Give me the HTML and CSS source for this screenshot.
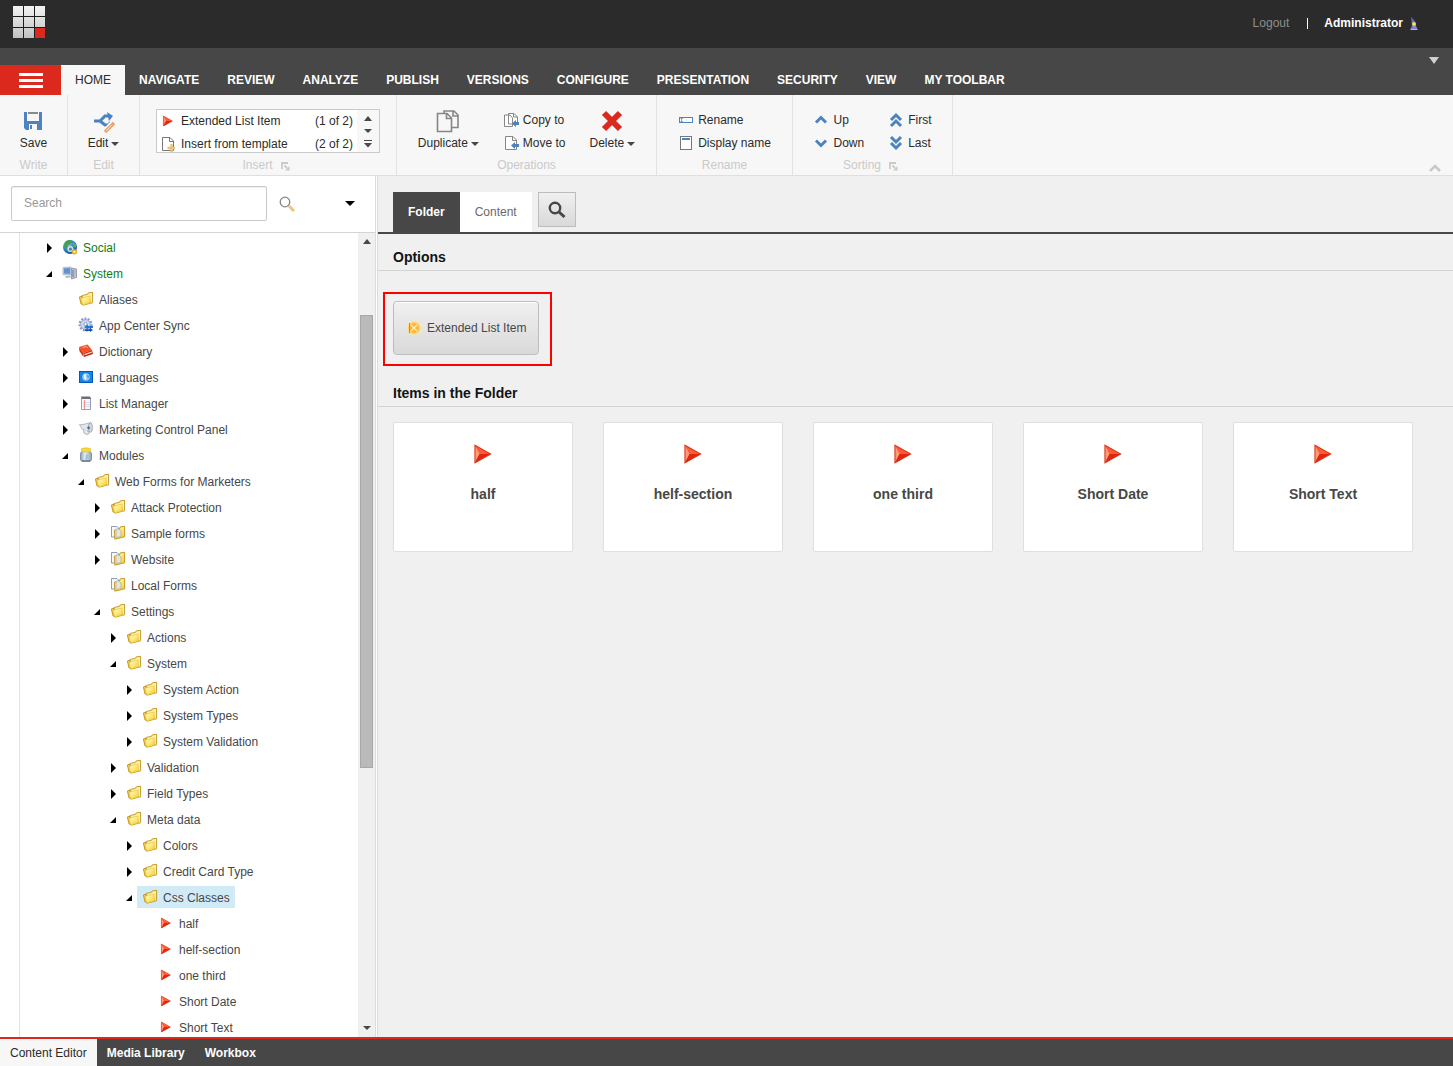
FILE: index.html
```html
<!DOCTYPE html>
<html lang="en">
<head>
    <meta charset="utf-8">
    <title>Content Editor</title>
    <link rel="stylesheet" href="styles.css">
</head>
<body>
    <!-- Icon sprite -->
    <svg class="sprite" width="0" height="0" aria-hidden="true">
        <defs>
            <linearGradient id="g-folder" x1="0" y1="0" x2="1" y2="1">
                <stop offset="0" stop-color="#fffbd8"/>
                <stop offset="0.5" stop-color="#fdea78"/>
                <stop offset="1" stop-color="#f3c62c"/>
            </linearGradient>
            <linearGradient id="g-logo" x1="0" y1="0" x2="0" y2="1">
                <stop offset="0" stop-color="#f4f4f4"/>
                <stop offset="1" stop-color="#c0c0c0"/>
            </linearGradient>
            <linearGradient id="g-jar" x1="0" y1="0" x2="1" y2="0">
                <stop offset="0" stop-color="#8b9fae"/>
                <stop offset="0.4" stop-color="#e4f1f8"/>
                <stop offset="1" stop-color="#8fa3b2"/>
            </linearGradient>
            <radialGradient id="g-globe" cx="0.35" cy="0.3" r="0.8">
                <stop offset="0" stop-color="#9ad4f6"/>
                <stop offset="0.5" stop-color="#2f83cf"/>
                <stop offset="1" stop-color="#124a8c"/>
            </radialGradient>
            <radialGradient id="g-glow">
                <stop offset="0" stop-color="#ffa62b"/>
                <stop offset="0.55" stop-color="#ffb93a"/>
                <stop offset="0.8" stop-color="#ffe07c" stop-opacity="0.7"/>
                <stop offset="1" stop-color="#ffe89a" stop-opacity="0"/>
            </radialGradient>
        </defs>
        <symbol id="folder" viewBox="0 0 16 16">
            <path d="M1.4 6 L4 5 L5 13.6 L3 13 Z" fill="#f3cf4c" stroke="#bf9118" stroke-width="0.9"/>
            <path d="M4.2 4.4 L9.4 3.4 L10.2 1.9 L14.6 1.3 V11.8 L4.8 14.2 Z" fill="#fdf0a0" stroke="#bf9118" stroke-width="0.9"/>
            <path d="M3.2 7.2 L12 5 L12.6 12 L4.6 13.9 Z" fill="url(#g-folder)" stroke="#e3bb3c" stroke-width="0.6"/>
        </symbol>
        <symbol id="forms" viewBox="0 0 16 16">
            <path d="M1.5 1.5 H7 L8.5 3 V12 H1.5 Z" fill="#f5f7fb" stroke="#8791a8" stroke-width="0.9"/>
            <path d="M4.4 5.2 L9.4 4.4 L10.2 1.9 L14.6 1.3 V11.8 L4.8 14.2 Z" fill="url(#g-folder)" stroke="#bf9118" stroke-width="0.9"/>
            <path d="M6 4 H9 L11 6 V11.5 L6 12.6 Z" fill="#e4e6da" stroke="#b5aa7c" stroke-width="0.7"/>
        </symbol>
        <symbol id="arrow-red" viewBox="0 0 16 16">
            <path d="M3.4 3 L12.4 8 L3.4 13 Z" fill="#ff5a36"/>
            <path d="M3.4 3 L6 8 L3.4 13 Z" fill="#ff9a78"/>
            <path d="M6 8 H12.4 L3.4 13 Z" fill="#e02410"/>
            <path d="M3.4 3 L12.4 8 L3.4 13 Z" fill="none" stroke="#d8381c" stroke-width="0.6"/>
        </symbol>
        <symbol id="globe" viewBox="0 0 16 16">
            <circle cx="8" cy="8" r="7" fill="url(#g-globe)"/>
            <path d="M3 3 Q6 0 10 1.5 L9 5 L6 6 L5 10 L2 8 Z" fill="#43a04b"/>
            <path d="M11 3 L14 5 V9 L11 7 Z" fill="#58b04e"/>
            <circle cx="8.4" cy="10" r="2.3" fill="none" stroke="#d8dbde" stroke-width="1.5"/>
            <circle cx="12.4" cy="12.8" r="1.9" fill="#fff4c4" stroke="#dca828" stroke-width="1.4"/>
        </symbol>
        <symbol id="computer" viewBox="0 0 16 16">
            <path d="M1 2.5 L9 2 V10 L1 9.5 Z" fill="#c3cbd8" stroke="#a9b1c0" stroke-width="0.8"/>
            <path d="M2 3.5 L8 3.1 V8.8 L2 8.5 Z" fill="#5e92d2"/>
            <path d="M3 11 L8 10.5 L9 12.5 L4 13 Z" fill="#b7bcc6"/>
            <path d="M9.5 3 L14.5 4 V12.5 L9.5 14 Z" fill="#b9bdc8" stroke="#8b909e" stroke-width="0.8"/>
            <path d="M11 5 V12" stroke="#5a82bc"/>
        </symbol>
        <symbol id="gear" viewBox="0 0 16 16">
            <circle cx="7.5" cy="7.5" r="5.8" fill="none" stroke="#8f9bc2" stroke-width="2.4" stroke-dasharray="2 1.2"/>
            <circle cx="7.5" cy="7.5" r="4.8" fill="#d3d9ec" stroke="#98a4ca"/>
            <circle cx="7.5" cy="7" r="1.6" fill="#fff" stroke="#8b98bf"/>
            <path d="M6 10 L10 7.5 V9 H15 V11 H10 V12.5 Z" fill="#1c78d8"/>
            <path d="M15 13 L12 15 V14 H7 V12.2 H12 V11 Z" fill="#0d55ae"/>
        </symbol>
        <symbol id="book" viewBox="0 0 16 16">
            <path d="M1 4 L9.5 1.5 L14 7 L5.5 10 Z" fill="#f4502c"/>
            <path d="M1 4 L5.5 10 V14 L1.4 8 Z" fill="#d5361a"/>
            <path d="M5.5 10 L14 7 L15 11 L6 14 Z" fill="#c92a12"/>
            <path d="M6.5 11.6 L14 9" stroke="#f4dcd4" stroke-width="1.2"/>
            <path d="M4.5 4.6 L8.6 3.4 L9.8 5" fill="none" stroke="#ffab8c"/>
        </symbol>
        <symbol id="language" viewBox="0 0 16 16">
            <rect x="1.5" y="2.5" width="13" height="11" fill="#1484ea" stroke="#0757b8"/>
            <circle cx="8" cy="8" r="3.8" fill="#8fcbfa"/>
            <path d="M6 5.5 L8 5 L7.4 7.5 L8.6 9 L7.4 11 L6 8.6 Z" fill="#fff"/>
            <path d="M9 6 L11 7 L10 9.6 Z" fill="#2d8fe8"/>
        </symbol>
        <symbol id="list" viewBox="0 0 16 16">
            <path d="M3.5 3 H12.5 V14.5 H3.5 Z" fill="#f4f6fd" stroke="#9094b0" stroke-width="0.9"/>
            <path d="M3 1.5 H12 L13 4 H4 Z" fill="#6c6e78"/>
            <path d="M5 7.5 H12 M5 9.5 H12 M5 11.5 H12" stroke="#d3daf1"/>
            <path d="M6.5 5 V14" stroke="#e88a78" stroke-width="0.9"/>
        </symbol>
        <symbol id="megaphone" viewBox="0 0 16 16">
            <path d="M1.5 3.5 H5 L13 1.5 V11 L8 9.5 L4 8 Z" fill="#e3e5e8" stroke="#aaaeb4" stroke-width="0.8"/>
            <ellipse cx="12.4" cy="6.5" rx="2" ry="4.8" fill="#d5d8dc" stroke="#989ca2" stroke-width="0.8"/>
            <circle cx="10.6" cy="6.8" r="1.4" fill="#2a6fc4"/>
            <path d="M5.5 8.5 L6 12 L9 13.5 L11.5 12 L9 9.6" fill="#e6e8ea" stroke="#9da1a6" stroke-width="0.8"/>
        </symbol>
        <symbol id="jar" viewBox="0 0 16 16">
            <rect x="2.5" y="4.5" width="11" height="10" rx="2.5" fill="url(#g-jar)" stroke="#8496a4"/>
            <path d="M3.5 1.5 Q8 0.2 12.5 1.5 V4.5 Q8 5.6 3.5 4.5 Z" fill="#f9d93a" stroke="#e0b820" stroke-width="0.6"/>
            <path d="M8 7 L10 8 V12 L7 13 Z" fill="#9fc4dc"/>
            <path d="M4 13.8 H12" stroke="#5d6a75"/>
        </symbol>
        <symbol id="collapsed" viewBox="0 0 16 16">
            <path d="M6 3 L11 8 L6 13 Z" fill="#000"/>
        </symbol>
        <symbol id="expanded" viewBox="0 0 16 16">
            <path d="M11 5 V11 H5 Z" fill="#000"/>
        </symbol>
        <symbol id="down" viewBox="0 0 8 8">
            <path d="M0 2 H8 L4 6 Z" fill="currentColor"/>
        </symbol>
        <symbol id="up" viewBox="0 0 8 8">
            <path d="M0 6 H8 L4 1 Z" fill="currentColor"/>
        </symbol>
        <symbol id="launch" viewBox="0 0 9 9">
            <path d="M1 7 V1 H7" fill="none" stroke="#c9c9c9" stroke-width="1.8"/>
            <path d="M3.5 3.5 L6 6" stroke="#c9c9c9" stroke-width="1.8"/>
            <path d="M8.5 4 V8.5 H4 Z" fill="#c9c9c9"/>
        </symbol>
        <symbol id="sort-up" viewBox="0 0 16 16">
            <path d="M3 10.5 L8 5.5 L13 10.5" fill="none" stroke="#4c82bd" stroke-width="3"/>
        </symbol>
        <symbol id="sort-down" viewBox="0 0 16 16">
            <path d="M3 5.5 L8 10.5 L13 5.5" fill="none" stroke="#4c82bd" stroke-width="3"/>
        </symbol>
        <symbol id="sort-first" viewBox="0 0 16 16">
            <path d="M3 8 L8 3 L13 8 M3 14 L8 9 L13 14" fill="none" stroke="#4c82bd" stroke-width="3"/>
        </symbol>
        <symbol id="sort-last" viewBox="0 0 16 16">
            <path d="M3 2 L8 7 L13 2 M3 8 L8 13 L13 8" fill="none" stroke="#4c82bd" stroke-width="3"/>
        </symbol>
    </svg>

    <header class="top-bar">
        <a href="#" class="logo" aria-label="Start">
            <svg width="33" height="33" viewBox="0 0 33 33">
                <rect x="0" y="0" width="32" height="32" fill="url(#g-logo)"/>
                <rect x="22" y="22" width="10" height="10" fill="#dc291e"/>
                <path d="M10.5 0 V32 M21.5 0 V32 M0 10.5 H32 M0 21.5 H32" stroke="#1c1c1c"/>
            </svg>
        </a>
        <div class="account">
            <a href="#" class="logout">Logout</a>
            <span class="divider"></span>
            <span class="user">Administrator</span>
            <svg class="user-icon" width="8" height="14" viewBox="0 0 8 14">
                <path d="M1 0 L5 4 L6 9 H2 Z" fill="#6464bc"/>
                <path d="M2 9 H6 L8 13 H0 Z" fill="#8080d0"/>
                <circle cx="4" cy="7" r="2" fill="#f3e04a"/>
                <path d="M1 12.5 H7" stroke="#b4b4e6"/>
            </svg>
        </div>
    </header>

    <nav class="ribbon-tabs">
        <button class="menu-btn" aria-label="Menu"><span></span><span></span><span></span></button>
        <a href="#" class="active">HOME</a>
        <a href="#">NAVIGATE</a>
        <a href="#">REVIEW</a>
        <a href="#">ANALYZE</a>
        <a href="#">PUBLISH</a>
        <a href="#">VERSIONS</a>
        <a href="#">CONFIGURE</a>
        <a href="#">PRESENTATION</a>
        <a href="#">SECURITY</a>
        <a href="#">VIEW</a>
        <a href="#">MY TOOLBAR</a>
        <button class="tabs-more" aria-label="More">
            <svg width="10" height="8" viewBox="0 0 10 8"><path d="M0 1 H10 L5 8 Z" fill="#d0d0d0"/></svg>
        </button>
    </nav>

    <section class="ribbon">
        <div class="chunk chunk-write">
            <div class="chunk-body">
                <button class="big-btn">
                    <svg width="24" height="24" viewBox="0 0 24 24">
                        <path d="M3 3 H21 V21 H5 L3 19 Z" fill="#4f82be"/>
                        <rect x="6" y="3" width="12" height="9" fill="#f7f7f7"/>
                        <path d="M7 4 H17" stroke="#8a8a8a" stroke-width="2"/>
                        <rect x="8" y="15" width="8" height="6" fill="#f7f7f7"/>
                        <rect x="9" y="16" width="2" height="4" fill="#4f82be"/>
                    </svg>
                    <span>Save</span>
                </button>
            </div>
            <div class="chunk-title">Write</div>
        </div>
        <div class="chunk chunk-edit">
            <div class="chunk-body">
                <button class="big-btn">
                    <svg width="24" height="24" viewBox="0 0 24 24">
                        <path d="M2 12 H8 L13 7 H17 M8 12 L13 16 H17" fill="none" stroke="#4c82bd" stroke-width="3"/>
                        <path d="M15 3 L21 7 L17 12 Z M17 12 L20 16 L15 19 Z" fill="#4c82bd"/>
                        <path d="M12 24 L22 13" stroke="#f7f7f7" stroke-width="6"/>
                        <path d="M13 23 L22 14" stroke="#e9a069" stroke-width="3.4"/>
                        <path d="M14 22 L20 15.6" stroke="#fbe3cc" stroke-width="1"/>
                    </svg>
                    <span>Edit<svg class="caret" width="8" height="8"><use href="#down"/></svg></span>
                </button>
            </div>
            <div class="chunk-title">Edit</div>
        </div>
        <div class="chunk chunk-insert">
            <div class="chunk-body">
                <div class="gallery">
                    <div class="gallery-list">
                        <a href="#">
                            <svg width="16" height="16"><use href="#arrow-red"/></svg>
                            <span>Extended List Item</span>
                            <small>(1 of 2)</small>
                        </a>
                        <a href="#">
                            <svg width="16" height="16" viewBox="0 0 16 16">
                                <path d="M2.5 1.5 H10 L13.5 5 V14.5 H2.5 Z M9.5 1.5 V5.5 H13.5" fill="#fff" stroke="#777"/>
                                <path d="M11.5 8 V16 M7.5 12 H15" stroke="#e8c078" stroke-width="2.4"/>
                            </svg>
                            <span>Insert from template</span>
                            <small>(2 of 2)</small>
                        </a>
                    </div>
                    <div class="gallery-nav">
                        <button aria-label="Previous"><svg width="8" height="8"><use href="#up"/></svg></button>
                        <button aria-label="Next"><svg width="8" height="8"><use href="#down"/></svg></button>
                        <button aria-label="Expand">
                            <svg width="8" height="8" viewBox="0 0 8 8"><path d="M0 0.5 H8" stroke="#474747"/><path d="M0 3 H8 L4 7.5 Z" fill="#474747"/></svg>
                        </button>
                    </div>
                </div>
            </div>
            <div class="chunk-title with-launch">Insert <svg width="9" height="9"><use href="#launch"/></svg></div>
        </div>
        <div class="chunk chunk-operations">
            <div class="chunk-body">
                <button class="big-btn">
                    <svg width="24" height="24" viewBox="0 0 24 24" fill="#f7f7f7" stroke="#868686" stroke-width="1.6">
                        <path d="M8 2 H18 L22 6 V18.5 H8 Z M17 2 V7 H22"/>
                        <path d="M1.5 4.5 H11 L15.5 9 V22.5 H1.5 Z M10.5 4.5 V9.5 H15.5"/>
                    </svg>
                    <span>Duplicate<svg class="caret" width="8" height="8"><use href="#down"/></svg></span>
                </button>
                <div class="small-btns">
                    <button>
                        <svg width="16" height="16" viewBox="0 0 16 16">
                            <path d="M5.5 1.5 H11 L14.5 5 V12 H5.5 Z M10.5 1.5 V5 H14.5 M1.5 3 H7 L9.5 6 V14.5 H1.5 Z" fill="#fff" stroke="#868686"/>
                            <path d="M9 11.5 L13 8 V10 H16 V13 H13 V15 Z" fill="#4c82bd"/>
                        </svg>
                        Copy to
                    </button>
                    <button>
                        <svg width="16" height="16" viewBox="0 0 16 16">
                            <path d="M2.5 1.5 H10 L13.5 5 V14.5 H2.5 Z M9.5 1.5 V5.5 H13.5" fill="#fff" stroke="#868686"/>
                            <path d="M8 10.5 L12 7 V9 H16 V12 H12 V14 Z" fill="#4c82bd"/>
                        </svg>
                        Move to
                    </button>
                </div>
                <button class="big-btn">
                    <svg width="24" height="24" viewBox="0 0 24 24">
                        <path d="M4 4 L20 20 M20 4 L4 20" stroke="#dc291e" stroke-width="6"/>
                    </svg>
                    <span>Delete<svg class="caret" width="8" height="8"><use href="#down"/></svg></span>
                </button>
            </div>
            <div class="chunk-title">Operations</div>
        </div>
        <div class="chunk chunk-rename">
            <div class="chunk-body">
                <div class="small-btns">
                    <button>
                        <svg width="16" height="16" viewBox="0 0 16 16">
                            <rect x="1.5" y="5.5" width="13" height="5" fill="#fff" stroke="#4c82bd"/>
                            <path d="M2.5 6.5 H5 M3.5 6.5 V9.5 M2.5 9.5 H5" stroke="#999"/>
                        </svg>
                        Rename
                    </button>
                    <button>
                        <svg width="16" height="16" viewBox="0 0 16 16">
                            <rect x="2.5" y="1.5" width="11" height="13" fill="#fff" stroke="#777"/>
                            <path d="M4 4 H12" stroke="#4c82bd" stroke-width="2"/>
                        </svg>
                        Display name
                    </button>
                </div>
            </div>
            <div class="chunk-title">Rename</div>
        </div>
        <div class="chunk chunk-sorting">
            <div class="chunk-body">
                <div class="small-btns">
                    <button><svg width="16" height="16"><use href="#sort-up"/></svg>Up</button>
                    <button><svg width="16" height="16"><use href="#sort-down"/></svg>Down</button>
                </div>
                <div class="small-btns">
                    <button><svg width="16" height="16"><use href="#sort-first"/></svg>First</button>
                    <button><svg width="16" height="16"><use href="#sort-last"/></svg>Last</button>
                </div>
            </div>
            <div class="chunk-title with-launch">Sorting <svg width="9" height="9"><use href="#launch"/></svg></div>
        </div>
        <button class="ribbon-toggle" aria-label="Hide ribbon">
            <svg width="12" height="8" viewBox="0 0 12 8"><path d="M1 7 L6 2 L11 7" fill="none" stroke="#c9c9c9" stroke-width="2.6"/></svg>
        </button>
    </section>

    <div class="workspace">
        <aside class="sidebar">
            <form class="search">
                <input type="text" placeholder="Search" aria-label="Search">
                <button type="button" aria-label="Search">
                    <svg width="16" height="16" viewBox="0 0 16 16">
                        <path d="M10 10 L15 15" stroke="#efc579" stroke-width="3"/>
                        <circle cx="6" cy="6" r="4.8" fill="#fff" stroke="#858585" stroke-width="1.3"/>
                    </svg>
                </button>
                <button type="button" class="search-options" aria-label="Search options">
                    <svg width="10" height="10" viewBox="0 0 10 10"><path d="M0 2 H10 L5 7 Z" fill="#000"/></svg>
                </button>
            </form>
            <div class="tree-pane">
                <ul class="tree">
                    <li>
                        <div class="node"><svg><use href="#collapsed"/></svg><a href="#" class="green"><svg><use href="#globe"/></svg>Social</a></div>
                    </li>
                    <li>
                        <div class="node"><svg><use href="#expanded"/></svg><a href="#" class="green"><svg><use href="#computer"/></svg>System</a></div>
                        <ul>
                            <li><div class="node leaf"><a href="#"><svg><use href="#folder"/></svg>Aliases</a></div></li>
                            <li><div class="node leaf"><a href="#"><svg><use href="#gear"/></svg>App Center Sync</a></div></li>
                            <li><div class="node"><svg><use href="#collapsed"/></svg><a href="#"><svg><use href="#book"/></svg>Dictionary</a></div></li>
                            <li><div class="node"><svg><use href="#collapsed"/></svg><a href="#"><svg><use href="#language"/></svg>Languages</a></div></li>
                            <li><div class="node"><svg><use href="#collapsed"/></svg><a href="#"><svg><use href="#list"/></svg>List Manager</a></div></li>
                            <li><div class="node"><svg><use href="#collapsed"/></svg><a href="#"><svg><use href="#megaphone"/></svg>Marketing Control Panel</a></div></li>
                            <li>
                                <div class="node"><svg><use href="#expanded"/></svg><a href="#"><svg><use href="#jar"/></svg>Modules</a></div>
                                <ul>
                                    <li>
                                        <div class="node"><svg><use href="#expanded"/></svg><a href="#"><svg><use href="#folder"/></svg>Web Forms for Marketers</a></div>
                                        <ul>
                                            <li><div class="node"><svg><use href="#collapsed"/></svg><a href="#"><svg><use href="#folder"/></svg>Attack Protection</a></div></li>
                                            <li><div class="node"><svg><use href="#collapsed"/></svg><a href="#"><svg><use href="#forms"/></svg>Sample forms</a></div></li>
                                            <li><div class="node"><svg><use href="#collapsed"/></svg><a href="#"><svg><use href="#forms"/></svg>Website</a></div></li>
                                            <li><div class="node leaf"><a href="#"><svg><use href="#forms"/></svg>Local Forms</a></div></li>
                                            <li>
                                                <div class="node"><svg><use href="#expanded"/></svg><a href="#"><svg><use href="#folder"/></svg>Settings</a></div>
                                                <ul>
                                                    <li><div class="node"><svg><use href="#collapsed"/></svg><a href="#"><svg><use href="#folder"/></svg>Actions</a></div></li>
                                                    <li>
                                                        <div class="node"><svg><use href="#expanded"/></svg><a href="#"><svg><use href="#folder"/></svg>System</a></div>
                                                        <ul>
                                                            <li><div class="node"><svg><use href="#collapsed"/></svg><a href="#"><svg><use href="#folder"/></svg>System Action</a></div></li>
                                                            <li><div class="node"><svg><use href="#collapsed"/></svg><a href="#"><svg><use href="#folder"/></svg>System Types</a></div></li>
                                                            <li><div class="node"><svg><use href="#collapsed"/></svg><a href="#"><svg><use href="#folder"/></svg>System Validation</a></div></li>
                                                        </ul>
                                                    </li>
                                                    <li><div class="node"><svg><use href="#collapsed"/></svg><a href="#"><svg><use href="#folder"/></svg>Validation</a></div></li>
                                                    <li><div class="node"><svg><use href="#collapsed"/></svg><a href="#"><svg><use href="#folder"/></svg>Field Types</a></div></li>
                                                    <li>
                                                        <div class="node"><svg><use href="#expanded"/></svg><a href="#"><svg><use href="#folder"/></svg>Meta data</a></div>
                                                        <ul>
                                                            <li><div class="node"><svg><use href="#collapsed"/></svg><a href="#"><svg><use href="#folder"/></svg>Colors</a></div></li>
                                                            <li><div class="node"><svg><use href="#collapsed"/></svg><a href="#"><svg><use href="#folder"/></svg>Credit Card Type</a></div></li>
                                                            <li>
                                                                <div class="node"><svg><use href="#expanded"/></svg><a href="#" class="selected"><svg><use href="#folder"/></svg>Css Classes</a></div>
                                                                <ul>
                                                                    <li><div class="node leaf"><a href="#"><svg><use href="#arrow-red"/></svg>half</a></div></li>
                                                                    <li><div class="node leaf"><a href="#"><svg><use href="#arrow-red"/></svg>helf-section</a></div></li>
                                                                    <li><div class="node leaf"><a href="#"><svg><use href="#arrow-red"/></svg>one third</a></div></li>
                                                                    <li><div class="node leaf"><a href="#"><svg><use href="#arrow-red"/></svg>Short Date</a></div></li>
                                                                    <li><div class="node leaf"><a href="#"><svg><use href="#arrow-red"/></svg>Short Text</a></div></li>
                                                                </ul>
                                                            </li>
                                                        </ul>
                                                    </li>
                                                </ul>
                                            </li>
                                        </ul>
                                    </li>
                                </ul>
                            </li>
                        </ul>
                    </li>
                </ul>
                <div class="scrollbar">
                    <svg width="8" height="8"><use href="#up"/></svg>
                    <div class="track">
                        <div class="thumb"></div>
                    </div>
                    <svg width="8" height="8"><use href="#down"/></svg>
                </div>
            </div>
        </aside>

        <main class="content">
            <div class="editor-tabs">
                <button class="tab active">Folder</button>
                <button class="tab">Content</button>
                <button class="tab-search" aria-label="Search">
                    <svg width="18" height="18" viewBox="0 0 18 18">
                        <circle cx="7" cy="7" r="5.2" fill="none" stroke="#474747" stroke-width="2.4"/>
                        <path d="M10.5 10.5 L16.5 16" stroke="#474747" stroke-width="3"/>
                    </svg>
                </button>
            </div>
            <h2>Options</h2>
            <div class="options">
                <div class="highlight">
                    <button class="option-btn">
                        <svg width="16" height="16" viewBox="0 0 16 16">
                            <circle cx="8" cy="8" r="8" fill="url(#g-glow)"/>
                            <path d="M3.5 3 V13" stroke="#f0801c"/>
                            <path d="M5 5 L11 11 M11 5 L5 11" stroke="#fff2cc" stroke-width="1.3"/>
                        </svg>
                        Extended List Item
                    </button>
                </div>
            </div>
            <h2>Items in the Folder</h2>
            <div class="cards">
                <a href="#" class="card"><svg><use href="#arrow-red"/></svg>half</a>
                <a href="#" class="card"><svg><use href="#arrow-red"/></svg>helf-section</a>
                <a href="#" class="card"><svg><use href="#arrow-red"/></svg>one third</a>
                <a href="#" class="card"><svg><use href="#arrow-red"/></svg>Short Date</a>
                <a href="#" class="card"><svg><use href="#arrow-red"/></svg>Short Text</a>
            </div>
        </main>
    </div>

    <footer class="bottom-bar">
        <a href="#" class="active">Content Editor</a>
        <a href="#">Media Library</a>
        <a href="#">Workbox</a>
    </footer>
</body>
</html>
```

FILE: styles.css
```css
* {
    box-sizing: border-box;
}
body {
    margin: 0;
    height: 100vh;
    display: flex;
    flex-direction: column;
    overflow: hidden;
    font-family: "Liberation Sans", Arial, sans-serif;
    font-size: 12px;
    line-height: 16px;
    color: #474747;
    background: #f0f0f0;
}
a {
    color: inherit;
    text-decoration: none;
}
button {
    margin: 0;
    padding: 0;
    border: none;
    background: none;
    font: inherit;
    color: inherit;
    cursor: pointer;
}
svg {
    display: block;
    flex: none;
}
ul {
    margin: 0;
    padding: 0;
    list-style: none;
}
.sprite {
    position: absolute;
}

/* top bar */
.top-bar {
    flex: none;
    height: 48px;
    padding: 6px 35px 0 13px;
    display: flex;
    justify-content: space-between;
    background: #2b2b2b;
}
.account {
    display: flex;
    align-items: center;
    height: 34px;
}
.logout {
    color: #8e8e8e;
}
.divider {
    width: 1px;
    height: 11px;
    margin: 0 16px 0 18px;
    background: #fff;
}
.user {
    color: #fff;
    font-weight: bold;
}
.user-icon {
    margin: 2px 0 0 7px;
}

/* ribbon tabs */
.ribbon-tabs {
    flex: none;
    height: 47px;
    padding-top: 17px;
    display: flex;
    background: #474747;
    color: #fff;
}
.ribbon-tabs a {
    padding: 0 14px;
    line-height: 30px;
    font-weight: bold;
}
.ribbon-tabs a.active {
    background: #f7f7f7;
    color: #2b2b2b;
    font-weight: normal;
}
.menu-btn {
    width: 61px;
    display: flex;
    flex-direction: column;
    align-items: center;
    justify-content: center;
    gap: 3px;
    background: #dc291e;
}
.menu-btn span {
    width: 24px;
    height: 3px;
    background: #fff;
}
.tabs-more {
    align-self: flex-start;
    margin: -9px 14px 0 auto;
}

/* ribbon */
.ribbon {
    flex: none;
    height: 81px;
    display: flex;
    background: #f7f7f7;
    border-bottom: 1px solid #dfdfdf;
    color: #2b2b2b;
}
.chunk {
    display: flex;
    flex-direction: column;
    border-right: 1px solid #e3e3e3;
}
.chunk-body {
    height: 62px;
    padding-top: 14px;
    display: flex;
    align-items: flex-start;
    justify-content: center;
}
.chunk-title {
    display: flex;
    justify-content: center;
    color: #cacaca;
}
.chunk-title.with-launch {
    gap: 8px;
    padding-right: 4px;
}
.chunk-title svg {
    margin-top: 5px;
}
.chunk-write {
    width: 68px;
}
.chunk-edit {
    width: 72px;
}
.chunk-insert {
    width: 257px;
}
.chunk-operations {
    width: 260px;
}
.chunk-rename {
    width: 136px;
}
.chunk-sorting {
    width: 160px;
}
.chunk-operations .chunk-body,
.chunk-sorting .chunk-body {
    gap: 24px;
}
.big-btn {
    display: flex;
    flex-direction: column;
    align-items: center;
    gap: 2px;
}
.big-btn span {
    display: flex;
    align-items: center;
}
.caret {
    margin: 2px 0 0 3px;
}
.small-btns {
    display: flex;
    flex-direction: column;
    gap: 7px;
    padding-top: 3px;
}
.small-btns button {
    display: flex;
    align-items: center;
    gap: 4px;
}
.gallery {
    width: 224px;
    height: 44px;
    display: flex;
    border: 1px solid #cacaca;
    background: #fff;
    overflow: hidden;
}
.gallery-list {
    flex: 1;
}
.gallery-list a {
    height: 23px;
    padding: 3px 4px 0 3px;
    display: flex;
    align-items: flex-start;
    gap: 5px;
}
.gallery-list small {
    margin-left: auto;
    font-size: 12px;
}
.gallery-nav {
    width: 22px;
    display: flex;
    flex-direction: column;
    align-items: center;
    justify-content: space-evenly;
    background: #f7f7f7;
}
.caret,
.gallery-nav,
.scrollbar {
    color: #474747;
}
.ribbon-toggle {
    align-self: flex-end;
    margin: 0 12px 3px auto;
}

/* sidebar */
.workspace {
    flex: 1;
    min-height: 0;
    display: flex;
}
.sidebar {
    flex: none;
    width: 378px;
    display: flex;
    flex-direction: column;
    background: #fff;
    border-right: 3px double #dcdcdc;
}
.search {
    flex: none;
    height: 57px;
    padding: 10px 20px 11px 11px;
    display: flex;
    align-items: center;
    border-bottom: 1px solid #d4d4d4;
}
.search input {
    width: 256px;
    height: 35px;
    margin: 0 12px 0 0;
    padding: 0 12px 2px;
    border: 1px solid #cacaca;
    border-radius: 2px;
    box-shadow: inset 0 1px 1px #eee;
    font: inherit;
    color: #474747;
}
.search input::placeholder {
    color: #999;
}
.search-options {
    margin-left: auto;
}
.tree-pane {
    flex: 1;
    min-height: 0;
    display: flex;
}
.tree {
    flex: 1;
    margin-left: 19px;
    padding: 2px 0 0 21px;
    border-left: 1px solid #e3e3e3;
    overflow: hidden;
}
.tree ul {
    padding-left: 16px;
}
.node {
    height: 26px;
    display: flex;
    align-items: flex-start;
    padding-top: 1px;
}
.node svg {
    width: 16px;
    height: 16px;
}
.node > svg {
    margin-top: 4px;
}
.node a {
    height: 22px;
    padding: 3px 5px 0;
    display: flex;
    gap: 5px;
    line-height: 18px;
    white-space: nowrap;
}
.node.leaf {
    padding-left: 16px;
}
.node a.green {
    color: #0f7d0f;
}
.node a.selected {
    background: #d0ebf6;
}
.scrollbar {
    width: 17px;
    padding: 5px 0;
    display: flex;
    flex-direction: column;
    align-items: center;
    background: #f0f0f0;
}
.track {
    flex: 1;
    width: 13px;
    margin: 4px 0;
    padding: 65px 0 252px;
    display: flex;
}
.thumb {
    flex: 1;
    background: #bababa;
    border: 1px solid #a8a8a8;
}

/* content */
.content {
    flex: 1;
    min-width: 0;
    overflow: hidden;
}
.editor-tabs {
    height: 58px;
    padding: 16px 15px 0;
    display: flex;
    align-items: flex-start;
    border-bottom: 2px solid #474747;
}
.tab {
    height: 40px;
    padding: 0 15px;
    background: #fff;
    color: #6a6a6a;
}
.tab.active {
    background: #474747;
    color: #fff;
    font-weight: bold;
}
.tab-search {
    width: 38px;
    height: 35px;
    margin-left: 6px;
    display: flex;
    align-items: center;
    justify-content: center;
    border: 1px solid #bdbdbd;
    background: linear-gradient(#f0f0f0, #d9d9d9);
}
h2 {
    margin: 0;
    padding: 13px 15px 3px;
    border-bottom: 1px solid #d4d4d4;
    font-size: 14px;
    line-height: 20px;
    color: #131313;
}
.options {
    padding: 21px 5px 4px;
    display: flex;
}
.highlight {
    padding: 7px 11px 9px 8px;
    border: 2px solid #f00;
}
.option-btn {
    height: 54px;
    padding: 0 12px;
    display: flex;
    align-items: center;
    gap: 5px;
    border: 1px solid #bdbdbd;
    border-radius: 4px;
    background: linear-gradient(#f0f0f0, #d9d9d9);
    box-shadow: inset 0 1px #fff;
}
.cards {
    padding: 15px;
    display: flex;
    flex-wrap: wrap;
    gap: 30px;
}
.card {
    width: 180px;
    height: 130px;
    padding-top: 17px;
    display: flex;
    flex-direction: column;
    align-items: center;
    gap: 16px;
    background: #fff;
    border: 1px solid #dfdfdf;
    border-radius: 2px;
    font-size: 14px;
    line-height: 20px;
    font-weight: bold;
}
.card svg {
    width: 28px;
    height: 28px;
}

/* bottom bar */
.bottom-bar {
    flex: none;
    height: 29px;
    display: flex;
    background: #474747;
    border-top: 2px solid #dc291e;
    color: #fff;
}
.bottom-bar a {
    padding: 0 10px;
    line-height: 29px;
    font-weight: bold;
}
.bottom-bar a.active {
    background: #f7f7f7;
    color: #2b2b2b;
    font-weight: normal;
}
```
